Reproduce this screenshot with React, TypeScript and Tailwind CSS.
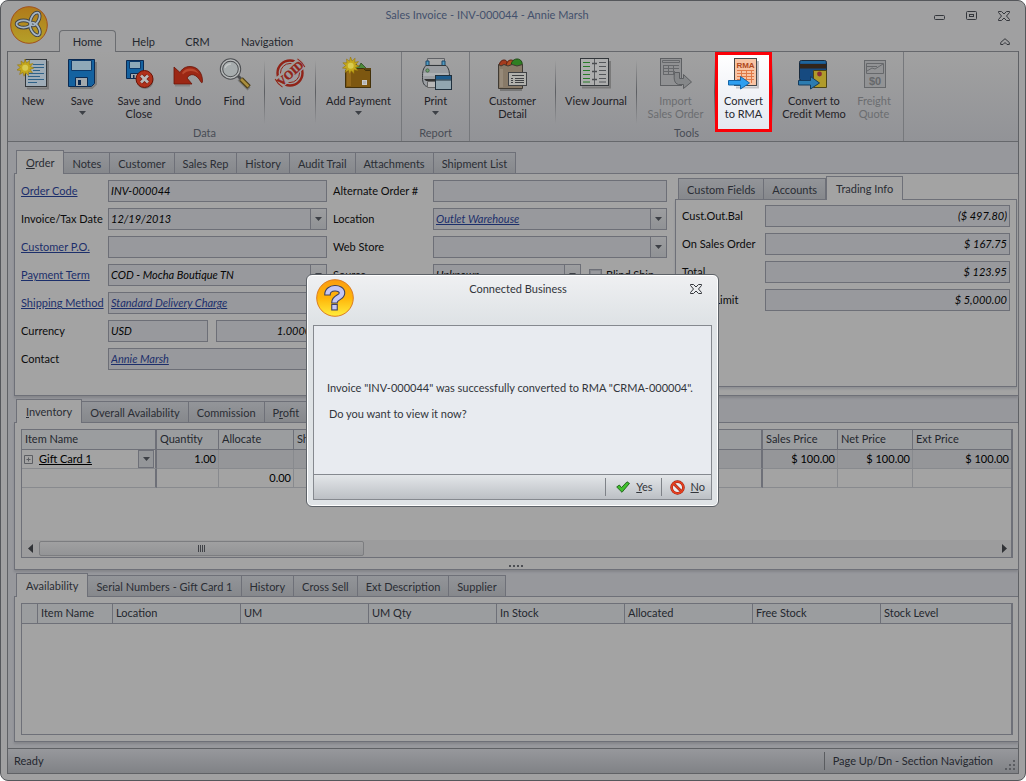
import React from "react";

const STAR =
  "M8 0 9.6 4 12.6 1.2 12.2 5.3 16 4.6 13.2 7.6 16.8 9 13 10.4 15.4 13.6 11.6 12.8 11.4 16.6 8.8 13.8 7 17.2 6 13.4 2.6 15.4 3.8 11.6 0 11 3.2 8.6 .4 5.8 4.4 5.8 4 2 7 4.2Z";

type IconProps = { children: React.ReactNode };

function Icon({ children }: IconProps) {
  return (
    <svg viewBox="0 0 36 36" className="size-9 shrink-0" aria-hidden="true">
      {children}
    </svg>
  );
}

function NewIcon() {
  return (
    <Icon>
      <path d="M12 32.5H33V5" stroke="#7c7c7c" strokeWidth="2" fill="none" />
      <rect x="10.5" y="3.5" width="21" height="27" fill="#9fadb8" stroke="#33373b" />
      <path d="M18 8.500h11M18 11.500h11M18 14.500h7M14 17.500h15M13 20.500h12M13 23.500h16M13 26.500h9" stroke="#2f6288" strokeWidth="1" />
      <path d={STAR} transform="translate(2 3)" fill="#c4a81c" stroke="#94730b" strokeWidth=".6" />
      <circle cx="10.2" cy="11.8" r="3" fill="#d8cb50" />
    </Icon>
  );
}

function SaveIcon() {
  return (
    <Icon>
      <path d="M6 32h22l4-4V6" stroke="#7c7c7c" strokeWidth="2" fill="none" />
      <path d="M4.500 3.500h26v24l-3 3h-23Z" fill="#1462a0" stroke="#0b2a52" />
      <path d="M7.500 4.500h20v10h-20Z" fill="#8fa9b8" stroke="#0d3a6a" />
      <path d="M11.500 21.500h12v9h-12Z" fill="#a3a9ad" stroke="#0b2a52" />
      <path d="M14 24h3v5h-3Z" fill="#0b2a52" />
    </Icon>
  );
}

function SaveCloseIcon() {
  return (
    <Icon>
      <path d="M5.500 4.500h17v18h-17Z" fill="#1462a0" stroke="#0b2a52" />
      <path d="M8.500 5.500h11v7h-11Z" fill="#8fa9b8" stroke="#0d3a6a" />
      <path d="M9.500 17.500h8v5h-8Z" fill="#a3a9ad" stroke="#0b2a52" />
      <path d="M12 19h1.500v3H12Z" fill="#0b2a52" />
      <circle cx="24" cy="24.500" r="8.500" fill="#777" />
      <circle cx="23.500" cy="23" r="8.500" fill="#b0301a" stroke="#691407" />
      <path d="m20 19.500 7 7m0-7-7 7" stroke="#7a1c0e" strokeWidth="4.400" />
      <path d="m20 19.500 7 7m0-7-7 7" stroke="#b9b9b9" strokeWidth="2.800" />
    </Icon>
  );
}

function UndoIcon() {
  return (
    <Icon>
      <path d="M5 29.500h15" stroke="#858585" strokeWidth="2" />
      <path
        d="M4 11v17h18l-5-6c3-5 9-5 14 4 .500 1 1.500 1 1.500-.500C32.500 16 27 10.500 20 10.500c-5 0-8 2.500-10 6Z"
        fill="#9c2714"
        stroke="#691407"
        strokeWidth=".8"
      />
      <path d="M12 17c4-6 13-6 17 1-5-4-12-4-16 .500Z" fill="#b8482f" />
    </Icon>
  );
}

function FindIcon() {
  return (
    <Icon>
      <path d="m23 23 10 10" stroke="#777" strokeWidth="4" />
      <path d="m22 20 4 4" stroke="#4b4d50" strokeWidth="3" />
      <path d="m25 23 8 8" stroke="#4a3b14" strokeWidth="5" />
      <path d="m25 23 7.500 7.500" stroke="#a98d3d" strokeWidth="2.600" />
      <circle cx="14.500" cy="13" r="9" fill="#a7adae" stroke="#4b4d50" strokeWidth="3.400" />
      <circle cx="14.500" cy="13" r="9" fill="none" stroke="#b8bbbb" strokeWidth="1.400" />
      <path d="M9 12c1-3 3-4 6-4" stroke="#c3c7c7" strokeWidth="1.400" fill="none" />
    </Icon>
  );
}

function VoidIcon() {
  return (
    <Icon>
      <circle cx="18" cy="17" r="12.500" fill="none" stroke="#902318" strokeWidth="2.400" />
      <circle cx="18" cy="17" r="9.500" fill="none" stroke="#902318" strokeWidth="1" />
      <g transform="rotate(-42 18 17)">
        <rect x=".500" y="11" width="35" height="12" rx="4" fill="#a09c9c" />
        <path d="M3 11.500C2 15 2 19 3 22.500M33 11.500c1 3.500 1 7.500 0 11" stroke="#902318" strokeWidth="1" fill="none" />
        <text
          x="18"
          y="21.500"
          textAnchor="middle"
          fontSize="12"
          fontWeight="bold"
          fontFamily="Liberation Serif, serif"
          fill="#902318"
          stroke="#902318"
          strokeWidth=".4"
        >
          VOID
        </text>
      </g>
    </Icon>
  );
}

function PaymentIcon() {
  return (
    <Icon>
      <path d="m10 14 4-7 4 4 2-4 8 8Z" fill="#4c8a3a" stroke="#2f4a22" strokeWidth=".8" />
      <path d="M20 12h10v20h-6" fill="#5d4410" />
      <path d="M4.500 14.500h3l2-2h13l2 2h5v17h-25Z" fill="#7d5710" stroke="#42300a" />
      <path d="M6 16h4v14H6Z" fill="#94691b" />
      <rect x="21.500" y="24.500" width="4" height="4" fill="#b4b4b4" stroke="#c9c9c9" />
      <path d={STAR} transform="translate(1.500 1)" fill="#c4a81c" stroke="#94730b" strokeWidth=".6" />
      <circle cx="9.700" cy="9.800" r="3" fill="#d8cb50" />
    </Icon>
  );
}

function PrintIcon() {
  return (
    <Icon>
      <path d="M9.500 8V2.500h17V8" fill="#a8a8a8" stroke="#606266" />
      <path d="M8 5h3v5H8Zm16 0h3v5h-3Z" fill="#4f9ac0" stroke="#1d4668" />
      <path d="M8 9.500h20c3 3 3.500 6 3.500 12 0 6-2 9-5 9H10c-4 0-5.500-4-5.500-9 0-6 .500-9 3.500-12Z" fill="#9b9ea2" stroke="#33373b" />
      <path d="M5.500 18.500h25" stroke="#adb0b3" strokeWidth="3" />
      <circle cx="9.500" cy="14.500" r="1.700" fill="#6fa06f" stroke="#3e5c3e" strokeWidth=".8" />
      <path d="M6 23h12v2H8" fill="#333" />
      <path d="M9.500 25.500h9v6h-9Z" fill="#b7b7b7" stroke="#666" />
      <rect x="17.500" y="19.500" width="16" height="14" fill="#92a6b0" stroke="#20303d" />
      <path d="M18 20h15v3.500H18Z" fill="#1d5b8c" />
      <path d="M18 24h15" stroke="#20303d" />
    </Icon>
  );
}

function CustomerIcon() {
  return (
    <Icon>
      <path d="M5 34h22" stroke="#777" strokeWidth="2" />
      <path d="M4 11c0-4 2-7 5-7s4 3 4 7" fill="#a43b1e" stroke="#5f2010" />
      <path d="M11 11c0-4 2-7 5-7s4 3 4 7" fill="#b04c22" stroke="#5f2010" />
      <path d="M17 11c-2-4 1-8 5-8s6 3 5 8" fill="#2f7f22" stroke="#1c4713" />
      <path d="M3.500 8.500 6 10l3-1.500 4 1.500 4-1.500 5 1.500 5.500-1.500v24h-24Z" fill="#887a68" stroke="#3f3a33" />
      <path d="M5 13h3v18H5Z" fill="#978a79" />
      <rect x="13.500" y="16.500" width="18" height="13" fill="#b1b1ad" stroke="#3f4144" />
      <path d="M17 19.500h12M16 22.500h2m2 0h9M16 24.500h2m2 0h9M16 26.500h2m2 0h9" stroke="#3f4144" />
    </Icon>
  );
}

function JournalIcon() {
  return (
    <Icon>
      <path d="M4 31.500h28V5" stroke="#7a7a7a" strokeWidth="2" fill="none" />
      <rect x="2.500" y="2.500" width="28" height="27" fill="#adaeae" stroke="#33373b" />
      <path d="M16.500 3v26" stroke="#5b5d60" strokeWidth="1" />
      <path d="M14 7.500h5M14 15.500h5M14 23.500h5" stroke="#4a4c4f" strokeWidth="1.600" />
      <path d="M5 6.500h7M5 10.500h7M5 14.500h7M5 18.500h7M5 22.500h7M5 26h7" stroke="#287b28" strokeWidth="1.200" />
      <path d="M21 6.500h7M21 10.500h7M21 14.500h7M21 18.500h7M21 22.500h7M21 26h7" stroke="#54575a" strokeWidth="1.200" />
    </Icon>
  );
}

function ImportIcon() {
  return (
    <Icon>
      <rect x="2.500" y="2.500" width="21" height="27" fill="#909193" stroke="#5e6063" />
      <path d="M4.500 4.500h17v2h-17ZM5 9.500h16M5 12.500h16M5 15.500h12M5 18.500h12M5.500 9v10M10.500 9v10M15.500 9v10" stroke="#66686b" fill="none" />
      <path d="M16.500 16.500h5v6h4v-4l8 7.500-8 6.500v-4h-5c-4-1-5-5-4-12Z" fill="#858789" stroke="#5c5e61" />
    </Icon>
  );
}

function BlueArrow({ bright }: { bright?: boolean }) {
  return (
    <path
      d="M2.500 24.500h12v-4l9 6.500-9 6v-4h-12Z"
      fill={bright ? "#2e9ff0" : "#2c7cb0"}
      stroke={bright ? "#1465a8" : "#143b5e"}
    />
  );
}

function RmaIcon() {
  return (
    <Icon>
      <path d="M10 31.500h22V5" stroke="#c3c3c6" strokeWidth="2" fill="none" />
      <rect x="8.500" y="2.500" width="22" height="27" fill="#f8c4a4" stroke="#44474a" />
      <text x="19.500" y="11.500" textAnchor="middle" fontSize="8" fontWeight="bold" fontFamily="Liberation Sans, sans-serif" fill="#b0481c">
        RMA
      </text>
      <path d="M11 14.500h17M11 17.500h17M11 20.500h17M11 23.500h17M15.500 14v10M20.500 14v13M25.500 14v13" stroke="#e07a48" />
      <BlueArrow bright />
    </Icon>
  );
}

function CreditMemoIcon() {
  return (
    <Icon>
      <rect x="3.500" y="4.500" width="27" height="20" rx="2" fill="#164a80" stroke="#17293c" />
      <path d="M4 8h26v4.500H4Z" fill="#33251a" />
      <path d="M4.500 5h25v2.500h-25Z" fill="#20659a" />
      <path d="M17.500 14.500h13v17h-13Z" fill="#b09b2a" stroke="#4c4516" />
      <circle cx="23.500" cy="18" r="2.400" fill="#8b2e36" />
      <BlueArrow />
    </Icon>
  );
}

function FreightIcon() {
  return (
    <Icon>
      <rect x="8.500" y="4.500" width="21" height="27" fill="#929395" stroke="#66686b" />
      <path d="M10.500 7.500h17v10h-17ZM11 15l5-3 3 1 8-5M11 10.500h10" stroke="#66686b" fill="none" />
      <text x="19" y="28.500" textAnchor="middle" fontSize="11" fontWeight="bold" fontFamily="Liberation Sans, sans-serif" fill="#66686b">
        $0
      </text>
    </Icon>
  );
}

function Caret({ className = "" }: { className?: string }) {
  return (
    <svg viewBox="0 0 7 4" className={"h-1 w-[7px] " + className} aria-hidden="true">
      <path d="M0 0h7L3.500 4Z" fill="#3d4046" />
    </svg>
  );
}

function RibbonButton({
  icon,
  lines,
  width,
  caret,
  disabled,
  highlight,
}: {
  icon: React.ReactNode;
  lines: string[];
  width: string;
  caret?: boolean;
  disabled?: boolean;
  highlight?: boolean;
}) {
  return (
    <button
      type="button"
      disabled={disabled}
      className={
        "flex shrink-0 flex-col items-center whitespace-nowrap text-[11px] leading-[13px] " +
        width +
        " " +
        (highlight
          ? "-mb-2 h-20 border-3 border-[#fb0007] bg-linear-to-b from-white to-[#e4e8f0] pt-px text-[#26282e]"
          : "h-18 pt-1 " + (disabled ? "text-[#6b6d70]" : "text-[#1f2126]"))
      }
    >
      {icon}
      <span className="mt-0.5 flex flex-col items-center">
        {lines.map((l) => (
          <span key={l}>{l}</span>
        ))}
      </span>
      {caret && <Caret className="mt-1" />}
    </button>
  );
}

function RibbonSep() {
  return <span className="mt-2 h-16 w-px shrink-0 bg-linear-to-b from-transparent via-[#5c5e62] to-transparent" />;
}

function RibbonGroup({ title, children }: { title: string; children: React.ReactNode }) {
  return (
    <section className="flex shrink-0 flex-col border-r border-[#76787c]">
      <div className="flex">{children}</div>
      <p className="h-[17px] text-center text-[11px] leading-[17px] text-[#484c55]">{title}</p>
    </section>
  );
}

type Tab = { label: string; hot?: number };

function TabStrip({ tabs, active, left = "pl-0.5" }: { tabs: Tab[]; active: number; left?: string }) {
  return (
    <div role="tablist" className={"relative flex h-[23px] items-end " + left}>
      {tabs.map(({ label, hot }, i) => (
        <button
          key={label}
          type="button"
          role="tab"
          aria-selected={i === active}
          className={
            "shrink-0 whitespace-nowrap border text-[11px] leading-4 text-[#2a2d34] border-[#6e7078] " +
            (i === active
              ? "-mb-px h-6 border-b-0 bg-[#a3a3a3] px-[9px]"
              : "h-[21px] border-b-0 border-l-0 bg-linear-to-b from-[#939599] to-[#86888c] px-2 pt-0.5 first:border-l")
          }
        >
          {hot === undefined ? (
            label
          ) : (
            <>
              {label.slice(0, hot)}
              <u>{label[hot]}</u>
              {label.slice(hot + 1)}
            </>
          )}
        </button>
      ))}
    </div>
  );
}

const FIELD =
  "h-[22px] w-full min-w-0 border border-[#6d6f77] bg-[#98999d] pb-px text-[11px] leading-4 italic rounded-none outline-none";
const LINK = "text-[#1c2f6b] underline";

function Label({ id, text, link, className = "" }: { id: string; text: string; link?: boolean; className?: string }) {
  return (
    <label htmlFor={id} className={"whitespace-nowrap text-[11px] leading-[22px] text-[#0b0b0c] " + className}>
      {link ? (
        <a href="#" className={LINK}>
          {text}
        </a>
      ) : (
        text
      )}
    </label>
  );
}

function TextField({ id, value = "", link, right, label }: { id: string; value?: string; link?: boolean; right?: boolean; label?: string }) {
  return (
    <input
      id={id}
      type="text"
      aria-label={label}
      defaultValue={value}
      className={FIELD + " px-0.5 " + (link ? LINK : "text-[#050505]") + (right ? " text-right" : "")}
    />
  );
}

function SelectField({ id, value, link }: { id: string; value: string; link?: boolean }) {
  return (
    <div className="relative flex w-full min-w-0">
      <select id={id} defaultValue={value} className={FIELD + " appearance-none pr-5 pl-0.5 " + (link ? LINK : "text-[#050505]")}>
        <option value={value}>{value}</option>
      </select>
      <span className="pointer-events-none absolute inset-y-px right-px grid w-4 place-items-center border-l border-[#6d6f77] bg-linear-to-b from-[#9d9ea0] to-[#909295]">
        <Caret />
      </span>
    </div>
  );
}

function CloseGlyph() {
  return (
    <svg viewBox="0 0 12 10" className="h-2.5 w-3" aria-hidden="true">
      <path d="M.500.500h3L6 3 8.500.500h3v1L8.500 5l3 3.500v1h-3L6 7 3.500 9.500h-3v-1l3-3.500-3-3.500Z" fill="none" stroke="#34373c" />
    </svg>
  );
}

const ORDER_TABS: Tab[] = [
  { label: "Order", hot: 0 },
  { label: "Notes" },
  { label: "Customer" },
  { label: "Sales Rep" },
  { label: "History" },
  { label: "Audit Trail" },
  { label: "Attachments" },
  { label: "Shipment List" },
];
const INVENTORY_TABS: Tab[] = [
  { label: "Inventory", hot: 0 },
  { label: "Overall Availability" },
  { label: "Commission" },
  { label: "Profit", hot: 1 },
];
const DETAIL_TABS: Tab[] = [
  { label: "Availability" },
  { label: "Serial Numbers - Gift Card 1" },
  { label: "History" },
  { label: "Cross Sell" },
  { label: "Ext Description" },
  { label: "Supplier" },
];
const TRADING = [
  ["Cust.Out.Bal", "($ 497.80)"],
  ["On Sales Order", "$ 167.75"],
  ["Total", "$ 123.95"],
  ["Credit Limit", "$ 5,000.00"],
];

const PANEL = "border border-[#6e7078] bg-[#a3a3a3] border-r-0 shadow-[0_2px_2px_#85868b]";
const TH = "h-5 border-b border-r border-[#6e7078] bg-[#9b9d9f] p-0 pb-0.5 pl-[3px] text-left font-normal text-[#24272e]";
const TD = "h-[19px] border-b border-r border-[#888a8e] p-0 pr-0.5 text-right";

function Header() {
  return (
    <header className="flex h-[50px]">
      <div className="w-[58px] shrink-0 pt-[5px] pl-[9px]">
        <svg viewBox="0 0 38 38" className="size-[38px]" aria-label="Connected Business">
          <defs>
            <linearGradient id="gold" x1="0" y1="0" x2="0" y2="1">
              <stop offset="0" stopColor="#b0791a" />
              <stop offset="1" stopColor="#b5a029" />
            </linearGradient>
          </defs>
          <circle cx="19" cy="19" r="18.300" fill="url(#gold)" stroke="#a1501c" />
          {["#3e4146", "#a5b5c4"].map((c, i) => (
            <g key={c} fill="none" stroke={c} strokeWidth={i ? 1.8 : 3.6}>
              <ellipse cx="13.500" cy="18" rx="7" ry="3.600" />
              <ellipse cx="25" cy="13" rx="7" ry="3.800" transform="rotate(-62 25 13)" />
              <ellipse cx="25" cy="23" rx="7" ry="3.800" transform="rotate(58 25 23)" />
            </g>
          ))}
        </svg>
      </div>
      <div className="flex min-w-0 flex-1 flex-col">
        <div className="flex h-[29px] items-center">
          <h1 className="flex-1 text-center text-[11px] text-[#43506c]">Sales Invoice - INV-000044 - Annie Marsh</h1>
          <div className="flex w-[110px] shrink-0 items-center justify-end gap-5 pr-[15px]">
            <button type="button" aria-label="Minimize">
              <svg viewBox="0 0 12 10" className="h-2.5 w-3">
                <rect x=".5" y="4.500" width="10" height="4" rx="1" fill="none" stroke="#34373c" />
              </svg>
            </button>
            <button type="button" aria-label="Maximize">
              <svg viewBox="0 0 12 10" className="h-2.5 w-3">
                <rect x=".5" y=".5" width="10" height="8" rx="1" fill="none" stroke="#34373c" />
                <rect x="3.500" y="3.500" width="4" height="2" fill="none" stroke="#34373c" />
              </svg>
            </button>
            <button type="button" aria-label="Close window">
              <CloseGlyph />
            </button>
          </div>
        </div>
        <nav className="flex h-[21px] items-stretch text-[11px] leading-4 text-[#24272e]">
          <button
            type="button"
            className="relative z-10 -mb-px w-[57px] rounded-t border border-b-0 border-[#6b6d71] bg-[#a1a1a2]"
          >
            Home
          </button>
          <button type="button" className="w-[55px] pt-0.5">Help</button>
          <button type="button" className="w-[53px] pt-0.5">CRM</button>
          <button type="button" className="w-[86px] pt-0.5">Navigation</button>
          <button type="button" aria-label="Collapse ribbon" className="ml-auto pt-0.5 pr-[15px]">
            <svg viewBox="0 0 10 8" className="h-2 w-2.5">
              <path d="M5 .700 9.300 4.500v2H7L5 4.500l-2 2H.700v-2Z" fill="none" stroke="#34373c" />
            </svg>
          </button>
        </nav>
      </div>
    </header>
  );
}

function Ribbon() {
  return (
    <div className="flex h-[91px] shrink-0 overflow-hidden border-y border-[#66686c] bg-linear-to-b from-[#a1a1a1] to-[#929397]">
      <RibbonGroup title="Data">
        <RibbonButton icon={<NewIcon />} lines={["New"]} width="w-[50px]" />
        <RibbonButton icon={<SaveIcon />} lines={["Save"]} width="w-12" caret />
        <RibbonButton icon={<SaveCloseIcon />} lines={["Save and", "Close"]} width="w-[66px]" />
        <RibbonButton icon={<UndoIcon />} lines={["Undo"]} width="w-8" />
        <RibbonButton icon={<FindIcon />} lines={["Find"]} width="w-15" />
        <RibbonSep />
        <RibbonButton icon={<VoidIcon />} lines={["Void"]} width="w-[50px]" />
        <RibbonSep />
        <RibbonButton icon={<PaymentIcon />} lines={["Add Payment"]} width="w-[85px]" caret />
      </RibbonGroup>
      <RibbonGroup title="Report">
        <RibbonButton icon={<PrintIcon />} lines={["Print"]} width="w-[67px]" caret />
      </RibbonGroup>
      <RibbonGroup title="Tools">
        <RibbonButton icon={<CustomerIcon />} lines={["Customer", "Detail"]} width="w-[85px]" />
        <RibbonSep />
        <RibbonButton icon={<JournalIcon />} lines={["View Journal"]} width="w-20" />
        <RibbonSep />
        <RibbonButton icon={<ImportIcon />} lines={["Import", "Sales Order"]} width="w-[77px]" disabled />
        <RibbonSep />
        <RibbonButton icon={<RmaIcon />} lines={["Convert", "to RMA"]} width="w-[57px]" highlight />
        <RibbonSep />
        <RibbonButton icon={<CreditMemoIcon />} lines={["Convert to", "Credit Memo"]} width="w-[82px]" />
        <RibbonButton icon={<FreightIcon />} lines={["Freight", "Quote"]} width="w-[38px]" disabled />
        <span className="w-2.5" />
      </RibbonGroup>
    </div>
  );
}

function OrderPanel() {
  return (
    <section>
      <TabStrip tabs={ORDER_TABS} active={0} />
      <div className={"flex gap-2 pb-2 " + PANEL}>
        <div className="grid flex-[646] auto-rows-[22px] grid-cols-[87px_219fr_106px_234fr] content-start gap-y-1.5 pt-1.5 pl-1.5">
          <Label id="code" text="Order Code" link />
          <TextField id="code" value="INV-000044" />
          <Label id="alt" text="Alternate Order #" className="pl-1.5" />
          <TextField id="alt" />

          <Label id="date" text="Invoice/Tax Date" />
          <SelectField id="date" value="12/19/2013" />
          <Label id="loc" text="Location" className="pl-1.5" />
          <SelectField id="loc" value="Outlet Warehouse" link />

          <Label id="po" text="Customer P.O." link />
          <TextField id="po" />
          <Label id="web" text="Web Store" className="pl-1.5" />
          <SelectField id="web" value="" />

          <Label id="term" text="Payment Term" link />
          <SelectField id="term" value="COD - Mocha Boutique TN" />
          <Label id="source" text="Source" className="pl-1.5" />
          <div className="flex items-center gap-2">
            <div className="flex w-[148px] shrink-0">
              <SelectField id="source" value="Unknown" />
            </div>
            <label className="flex items-center gap-1 whitespace-nowrap text-[11px] text-[#0b0b0c]">
              <input type="checkbox" className="size-[13px] appearance-none border border-[#6d6f77] bg-[#98999d] inset-ring-1 inset-ring-[#85878c]" />
              Blind Ship
            </label>
          </div>

          <Label id="ship" text="Shipping Method" link />
          <TextField id="ship" value="Standard Delivery Charge" link />
          <span className="col-span-2" />

          <Label id="cur" text="Currency" />
          <div className="flex gap-2">
            <div className="flex w-[100px] shrink-0">
              <TextField id="cur" value="USD" />
            </div>
            <TextField id="rate" label="Exchange rate" value="1.000000" right />
          </div>
          <span className="col-span-2" />

          <Label id="contact" text="Contact" />
          <TextField id="contact" value="Annie Marsh" link />
          <span className="col-span-2" />
        </div>
        <div className="mr-px flex flex-[342] flex-col pt-0.5">
          <TabStrip
            tabs={[{ label: "Custom Fields" }, { label: "Accounts" }, { label: "Trading Info" }]}
            active={2}
            left="pl-[3px]"
          />
          <div className="grid min-h-[188px] auto-rows-[22px] grid-cols-[83px_1fr] content-start gap-y-1.5 border border-[#6e7078] py-[5px] pr-1.5 pl-1.5 shadow-[0_2px_2px_#909195]">
            {TRADING.map(([label, value]) => (
              <React.Fragment key={label}>
                <Label id={label} text={label} />
                <TextField id={label} value={value} right />
              </React.Fragment>
            ))}
          </div>
        </div>
      </div>
    </section>
  );
}

function InventoryPanel() {
  return (
    <section className="mt-[3px]">
      <TabStrip tabs={INVENTORY_TABS} active={0} />
      <div className={"h-[148px] pt-1.5 pr-[5px] pl-1.5 " + PANEL}>
        <div className="flex h-[129px] flex-col border border-r-2 border-[#6e7078]">
          <table className="w-full table-fixed border-separate border-spacing-0 text-[11px] leading-4">
            <colgroup>
              <col className="w-[135px]" />
              <col className="w-[62px]" />
              <col className="w-[75px]" />
              <col className="w-[75px]" />
              <col />
              <col className="w-[75px]" />
              <col className="w-[75px]" />
              <col className="w-[98px]" />
            </colgroup>
            <thead>
              <tr>
                <th className={TH + " border-r-2"}>Item Name</th>
                <th className={TH}>Quantity</th>
                <th className={TH}>Allocate</th>
                <th className={TH}>Shipped</th>
                <th className={TH + " border-r-2"} />
                <th className={TH}>Sales Price</th>
                <th className={TH}>Net Price</th>
                <th className={TH + " border-r-0"}>Ext Price</th>
              </tr>
            </thead>
            <tbody>
              <tr className="bg-[#959699]">
                <td className={TD + " border-r-2 border-r-[#6e7078] bg-[#a3a3a3] pr-px"}>
                  <div className="flex h-[18px] items-center">
                    <button type="button" aria-label="Expand row" className="ml-0.5 text-[#5c5e63]">
                      <svg viewBox="0 0 9 9" className="size-[9px]">
                        <path d="M.500.500h8v8h-8ZM2.500 4.500h4M4.500 2.500v4" fill="none" stroke="currentColor" />
                      </svg>
                    </button>
                    <a href="#" className="ml-1.5 flex-1 text-left text-black underline">
                      Gift Card 1
                    </a>
                    <button
                      type="button"
                      aria-label="Choose item"
                      className="grid h-[18px] w-4 place-items-center border border-[#6e7078] bg-[#949699]"
                    >
                      <Caret />
                    </button>
                  </div>
                </td>
                <td className={TD}>1.00</td>
                <td className={TD} />
                <td className={TD} />
                <td className={TD + " border-r-2 border-r-[#6e7078]"} />
                <td className={TD}>$ 100.00</td>
                <td className={TD}>$ 100.00</td>
                <td className={TD + " border-r-0"}>$ 100.00</td>
              </tr>
              <tr>
                <td className={TD + " border-r-2 border-r-[#6e7078]"} />
                <td className={TD} />
                <td className={TD}>0.00</td>
                <td className={TD} />
                <td className={TD + " border-r-2 border-r-[#6e7078]"} />
                <td className={TD} />
                <td className={TD} />
                <td className={TD + " border-r-0"} />
              </tr>
            </tbody>
          </table>
          <div className="mt-auto flex h-[17px] items-center bg-[#9c9c9d] pr-1">
            <button type="button" aria-label="Scroll left" className="w-[17px] pl-1.5">
              <svg viewBox="0 0 5 9" className="h-[9px] w-[5px]">
                <path d="M5 0v9L0 4.500Z" fill="#303236" />
              </svg>
            </button>
            <div className="flex h-[15px] w-[33%] items-center justify-center gap-px rounded-xs border border-[#7c7d80] bg-linear-to-b from-[#a0a0a1] to-[#939496]">
              {[0, 1, 2, 3].map((n) => (
                <span key={n} className="h-[7px] w-px bg-[#404247]" />
              ))}
            </div>
            <button type="button" aria-label="Scroll right" className="ml-auto">
              <svg viewBox="0 0 5 9" className="h-[9px] w-[5px]">
                <path d="M0 0v9l5-4.500Z" fill="#303236" />
              </svg>
            </button>
          </div>
        </div>
      </div>
    </section>
  );
}

function AvailabilityPanel() {
  return (
    <section className="flex flex-1 flex-col">
      <div className="relative flex h-[3px] -translate-y-[5px] justify-center gap-0.5">
        {[0, 1, 2, 3].map((n) => (
          <span key={n} className="size-0.5 bg-[#4d4f54]" />
        ))}
      </div>
      <TabStrip tabs={DETAIL_TABS} active={0} />
      <div className={"flex flex-1 flex-col py-1.5 pr-[5px] pl-1.5 " + PANEL}>
        <div className="min-h-[120px] flex-1 border border-r-2 border-[#6e7078]">
          <table className="w-full table-fixed border-separate border-spacing-0 text-[11px] leading-4">
            <colgroup>
              <col className="w-4" />
              <col className="w-[75px]" />
              <col className="w-32" />
              <col className="w-32" />
              <col className="w-32" />
              <col className="w-32" />
              <col className="w-32" />
              <col className="w-32" />
              <col />
            </colgroup>
            <thead>
              <tr>
                <th className={TH} />
                {["Item Name", "Location", "UM", "UM Qty", "In Stock", "Allocated", "Free Stock", "Stock Level"].map((h) => (
                  <th key={h} className={TH + " last:border-r-0"}>
                    {h}
                  </th>
                ))}
              </tr>
            </thead>
          </table>
        </div>
      </div>
    </section>
  );
}

function Dialog() {
  return (
    <div className="absolute inset-0 z-20 grid place-items-center pr-px">
      <div
        role="dialog"
        aria-modal="true"
        aria-labelledby="dialog-title"
        className="flex h-[233px] w-[413px] flex-col rounded-md border border-[#5d6268] bg-linear-to-b from-[#eff0f2] to-[#dfe3e6] to-20% px-1.5 pb-1.5 text-[11px] text-[#32353b] inset-ring-1 inset-ring-white"
      >
        <div className="flex h-[50px] items-start">
          <svg viewBox="0 0 38 38" className="mt-1 ml-[3px] size-[38px]" aria-hidden="true">
            <defs>
              <linearGradient id="amber" x1="0" y1="0" x2="0" y2="1">
                <stop offset="0" stopColor="#fb9d10" />
                <stop offset=".5" stopColor="#ffb50a" />
                <stop offset="1" stopColor="#ffed3c" />
              </linearGradient>
            </defs>
            <circle cx="19" cy="19" r="18.300" fill="url(#amber)" stroke="#dc7c22" />
            {["#3f4262", "#c3c6f6"].map((c, i) => (
              <g key={c} fill="none" stroke={c} strokeWidth={i ? 4.400 : 6.600}>
                <path d={i ? "M11.500 15.500c0-8 14.500-8 14.500-1.500 0 5-7.500 4-7.500 9.500" : "M11.500 16.500v-1c0-8 14.500-8 14.500-1.500 0 5-7.500 4-7.500 9.500v1"} />
                <path d={i ? "M16.300 28.200h4.400" : "M15.200 28.200h6.600"} />
              </g>
            ))}
          </svg>
          <h2 id="dialog-title" className="flex-1 pt-1.5 pl-6 text-center leading-4">
            Connected Business
          </h2>
          <button type="button" aria-label="Close" className="mt-[9px] mr-2.5 ml-8">
            <CloseGlyph />
          </button>
        </div>
        <div className="flex flex-1 flex-col border border-[#85898f] bg-[#e8ebf0]">
          <div className="flex-1 px-[13px] pt-[54px] leading-4">
            <p>Invoice "INV-000044" was successfully converted to RMA "CRMA-000004".</p>
            <p className="mt-2.5 pl-0.5">Do you want to view it now?</p>
          </div>
          <div className="flex h-[25px] items-center justify-end border-t border-[#85898f] bg-linear-to-b from-[#e3e6e9] to-[#bcc0c5]">
            <span className="h-[18px] w-px bg-[#7e8288]" />
            <button type="button" className="flex items-center gap-1.5 pr-2 pl-2.5">
              <svg viewBox="0 0 14 12" className="h-3 w-3.5" aria-hidden="true">
                <path d="m.700 6 2.600-2 2.200 2.600L11 .800l2.500 1.600L6 11.300Z" fill="#3fbf2d" stroke="#1d5f18" strokeWidth=".9" />
              </svg>
              <span>
                <u>Y</u>es
              </span>
            </button>
            <span className="h-[18px] w-px bg-[#7e8288]" />
            <button type="button" className="flex items-center gap-1.5 pr-1.5 pl-2">
              <svg viewBox="0 0 16 16" className="size-[15px]" aria-hidden="true">
                <circle cx="8" cy="8" r="6.300" fill="#ececee" stroke="#8e1d12" strokeWidth="2.800" />
                <path d="m4 4 8 8" stroke="#8e1d12" strokeWidth="2.800" />
                <circle cx="8" cy="8" r="6.300" fill="none" stroke="#e8401f" strokeWidth="1.800" />
                <path d="m4 4 8 8" stroke="#e8401f" strokeWidth="1.800" />
              </svg>
              <span>
                <u>N</u>o
              </span>
            </button>
          </div>
        </div>
      </div>
    </div>
  );
}

export default function App() {
  return (
    <div className="relative min-h-screen bg-white font-[Lato,sans-serif]">
      <div className="flex min-h-screen flex-col overflow-hidden rounded-lg border border-[#55575b] bg-[#a0a0a1] pr-1.5 pb-1.5">
        <div className="-mr-1.5">
          <Header />
        </div>
        <div className="ml-1.5 flex flex-1 flex-col border-x border-[#5f6165] bg-[#97989c]">
          <Ribbon />
          <main className="flex flex-1 flex-col pt-2 pb-1.5 pl-1.5">
            <OrderPanel />
            <InventoryPanel />
            <AvailabilityPanel />
          </main>
          <footer className="flex h-[26px] items-center border-y border-[#5f6165] bg-linear-to-b from-[#97989c] to-[#808286] pl-1.5 text-[11px] text-[#24272e]">
            <span className="flex-1">Ready</span>
            <span className="mr-2 h-[18px] w-px bg-[#5a5c60]" />
            <span>Page Up/Dn - Section Navigation</span>
            <svg viewBox="0 0 11 11" className="mt-2 mr-0.5 ml-3 size-[11px]" aria-hidden="true">
              <path d="M8 0h2v2H8ZM4 4h2v2H4Zm4 0h2v2H8ZM0 8h2v2H0Zm4 0h2v2H4Zm4 0h2v2H8Z" fill="#5b5d62" />
            </svg>
          </footer>
        </div>
      </div>
      <Dialog />
    </div>
  );
}
